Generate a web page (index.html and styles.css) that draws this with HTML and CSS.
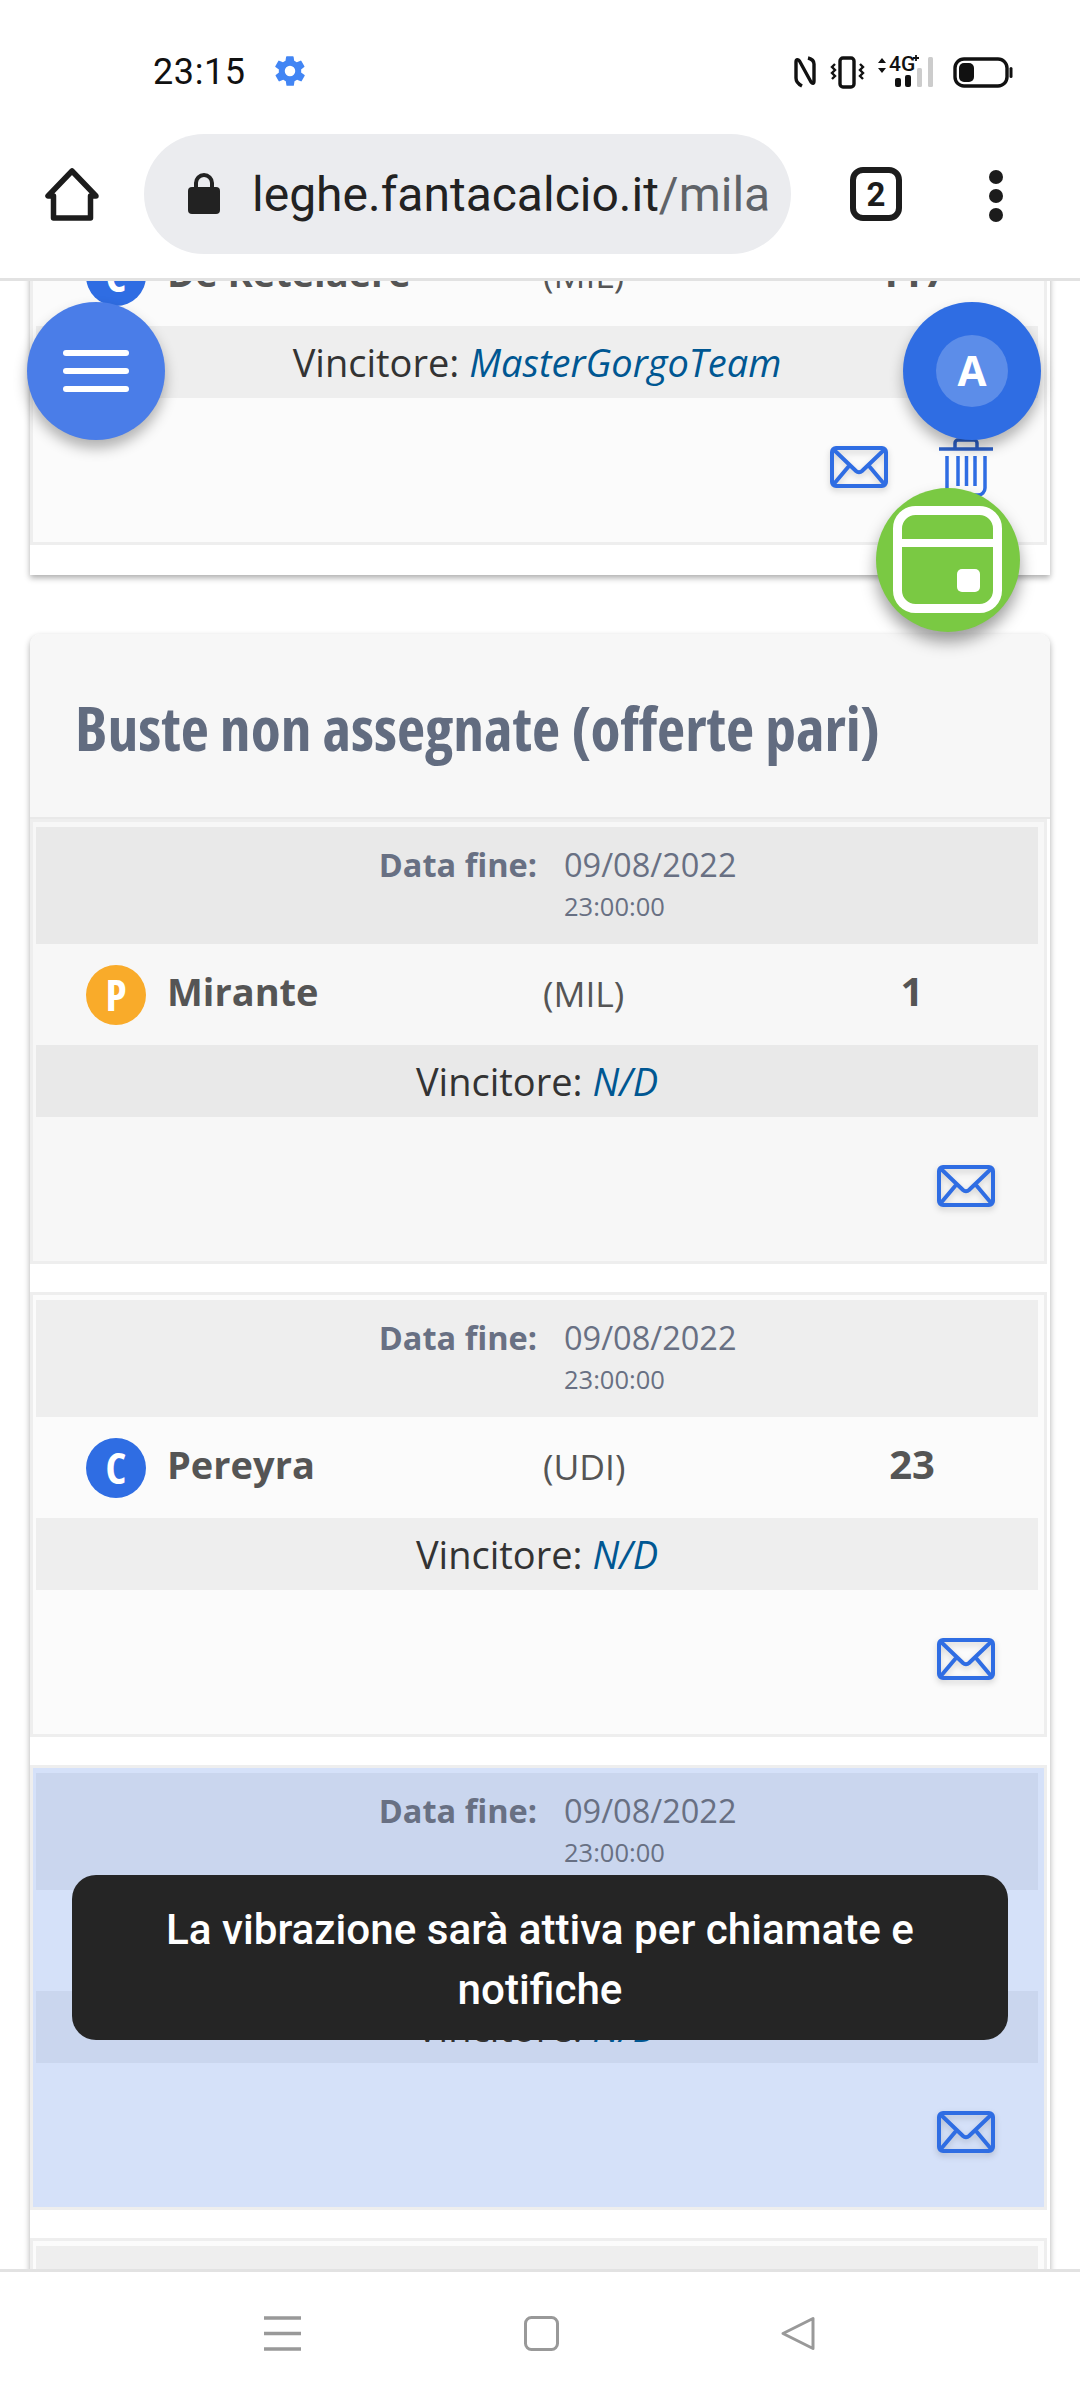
FILE: index.html
```html
<!DOCTYPE html>
<html lang="it">
<head>
<meta charset="utf-8">
<title>Buste</title>
<link rel="stylesheet" href="styles.css">
</head>
<body>
<div class="phone">
  <header class="status">
    <div class="status-left">
      <span class="clock">23:15</span>
      <svg class="gear" viewBox="0 0 24 24"><path fill="#4285f4" d="M19.4 13a7.5 7.5 0 0 0 0-2l2.1-1.6a.5.5 0 0 0 .1-.6l-2-3.5a.5.5 0 0 0-.6-.2l-2.5 1a7.400 7.400 0 0 0-1.700-1l-.4-2.600a.5.5 0 0 0-.5-.4h-4a.5.500 0 0 0-.5.4l-.4 2.600a7.400 7.400 0 0 0-1.700 1l-2.500-1a.5.500 0 0 0-.6.2l-2 3.500a.5.500 0 0 0 .1.600L4.600 11a7.500 7.500 0 0 0 0 2l-2.100 1.600a.5.500 0 0 0-.1.600l2 3.500c.1.200.4.300.6.200l2.500-1c.5.400 1.100.700 1.700 1l.4 2.600c0 .2.200.4.500.4h4c.3 0 .5-.2.500-.4l.4-2.600c.6-.3 1.200-.6 1.700-1l2.500 1c.2.100.5 0 .6-.2l2-3.500a.5.500 0 0 0-.1-.6zM12 15.500a3.500 3.500 0 1 1 0-7 3.500 3.500 0 0 1 0 7z"/></svg>
    </div>
    <svg class="sys-icons" viewBox="0 0 220 34" width="220" height="34">
      <g fill="none" stroke="#111" stroke-width="3.400">
        <path d="M9 31C5 29 3 27 3 23V7C3 4 5 4 6.500 6L18 27C19.500 29 21 29 21 26V9C21 6 19 4 15 3" stroke-linejoin="round"/>
        <rect x="47" y="3" width="14" height="29" rx="3"/>
        <path d="M42 9l-3 3 3 3-3 3 3 3-3 3M67 9l3 3-3 3 3 3-3 3 3 3" stroke-width="2.400"/>
      </g>
      <path d="M89 3l4 5h-8zM89 18l4-5h-8z" fill="#111"/>
      <text x="96" y="16" class="net">4G</text>
      <path d="M120 3h6M123 0v6" stroke="#111" stroke-width="1.800"/>
      <rect x="102" y="23" width="6" height="9" rx="2" fill="#111"/>
      <rect x="112" y="20" width="6" height="12" rx="2" fill="#111"/>
      <rect x="124" y="13" width="5" height="19" rx="1.500" fill="#ccc"/>
      <rect x="135" y="2" width="5" height="30" rx="1.500" fill="#ccc"/>
      <rect x="162" y="4" width="52" height="27" rx="9" fill="none" stroke="#111" stroke-width="3.400"/>
      <rect x="166" y="8" width="15" height="19" rx="5" fill="#111"/>
      <rect x="216.500" y="12" width="3" height="11" rx="1.500" fill="#111"/>
    </svg>
  </header>

  <nav class="toolbar">
    <svg class="home" viewBox="0 0 54 54"><path d="M27 4 3 29h5.500v22h37V29H51z" fill="none" stroke="#1c1c1c" stroke-width="5.500" stroke-linejoin="round"/></svg>
    <div class="omnibox">
      <svg class="lock" viewBox="0 0 32 42"><path d="M8 17v-6a8 8 0 0 1 16 0v6" fill="none" stroke="#222" stroke-width="4"/><rect x="0" y="15" width="32" height="27" rx="4" fill="#222"/></svg>
      <span class="url">leghe.fantacalcio.it<span class="url-path">/milan</span></span>
    </div>
    <div class="tabs">2</div>
    <div class="menu-dots"><i></i><i></i><i></i></div>
  </nav>

  <main class="viewport">
    <div class="scroller">
      <section class="card card--first">
        <article class="item">
          <div class="bar bar--date">
            <span class="date-label">Data fine:</span>
            <div class="date-value"><div>09/08/2022</div><small>23:00:00</small></div>
          </div>
          <div class="player">
            <div class="player-name"><span class="role role--c">C</span><strong>De Ketelaere</strong></div>
            <span class="team">(MIL)</span>
            <strong class="price">117</strong>
          </div>
          <div class="bar bar--winner">Vincitore: <em>MasterGorgoTeam</em></div>
          <div class="actions">
            <svg class="mail" viewBox="0 0 58 42"><use href="#mail-shape"/></svg>
            <svg class="trash" viewBox="0 0 58 60">
              <g fill="none" stroke="#2f6de3" stroke-width="3.500">
                <path d="M2 12h54" stroke="#2c60c8"/>
                <path d="M18 11V6a3 3 0 0 1 3-3h16a3 3 0 0 1 3 3v5" stroke="#2c60c8"/>
                <path d="M10 19v32a7 7 0 0 0 7 7h24a7 7 0 0 0 7-7V19M21 19v30M29.500 19v30M38 19v30"/>
              </g>
            </svg>
          </div>
        </article>
      </section>

      <section class="card">
        <h2 class="card-title">Buste non assegnate (offerte pari)</h2>
        <div class="items">
          <article class="item item--alt">
            <div class="bar bar--date">
              <span class="date-label">Data fine:</span>
              <div class="date-value"><div>09/08/2022</div><small>23:00:00</small></div>
            </div>
            <div class="player">
              <div class="player-name"><span class="role role--p">P</span><strong>Mirante</strong></div>
              <span class="team">(MIL)</span>
              <strong class="price">1</strong>
            </div>
            <div class="bar bar--winner">Vincitore: <em>N/D</em></div>
            <div class="actions"><svg class="mail" viewBox="0 0 58 42"><use href="#mail-shape"/></svg></div>
          </article>
          <article class="item">
            <div class="bar bar--date">
              <span class="date-label">Data fine:</span>
              <div class="date-value"><div>09/08/2022</div><small>23:00:00</small></div>
            </div>
            <div class="player">
              <div class="player-name"><span class="role role--c">C</span><strong>Pereyra</strong></div>
              <span class="team">(UDI)</span>
              <strong class="price">23</strong>
            </div>
            <div class="bar bar--winner">Vincitore: <em>N/D</em></div>
            <div class="actions"><svg class="mail" viewBox="0 0 58 42"><use href="#mail-shape"/></svg></div>
          </article>
          <article class="item item--active">
            <div class="bar bar--date">
              <span class="date-label">Data fine:</span>
              <div class="date-value"><div>09/08/2022</div><small>23:00:00</small></div>
            </div>
            <div class="bar bar--spacer"></div>
            <div class="bar bar--winner">Vincitore: <em>N/D</em></div>
            <div class="actions"><svg class="mail" viewBox="0 0 58 42"><use href="#mail-shape"/></svg></div>
          </article>
          <article class="item">
            <div class="bar bar--date"></div>
          </article>
        </div>
      </section>
    </div>

    <button class="fab fab--menu" aria-label="Menu"><i></i><i></i><i></i></button>
    <button class="fab fab--user"><span>A</span></button>
    <button class="fab fab--wallet" aria-label="Calendario">
      <svg viewBox="0 0 110 108" width="110" height="108"><rect x="4.500" y="4.500" width="100" height="98" rx="18" fill="none" stroke="#fff" stroke-width="9"/><path d="M5 37h99" stroke="#fff" stroke-width="8"/><rect x="64" y="63" width="23" height="23" rx="5" fill="#fff"/></svg>
    </button>
    <div class="toast">La vibrazione sarà attiva per chiamate e notifiche</div>
  </main>

  <footer class="navbar">
    <svg class="nav-icon" viewBox="0 0 37 35"><path d="M0 2h37M0 17.500h37M0 33h37" stroke="#999" stroke-width="3.500"/></svg>
    <svg class="nav-icon" viewBox="0 0 37 35"><rect x="2.500" y="1.500" width="32" height="32" rx="6" fill="none" stroke="#999" stroke-width="3"/></svg>
    <svg class="nav-icon nav-icon--back" viewBox="0 0 37 35"><path d="M33 2.500v30L3 17.500z" fill="none" stroke="#999" stroke-width="3" stroke-linejoin="round"/></svg>
  </footer>
</div>

<svg class="defs" width="0" height="0" aria-hidden="true">
  <defs>
    <g id="mail-shape" fill="none" stroke="#2f6de3" stroke-width="4">
      <rect x="2" y="2" width="54" height="38" rx="4"/>
      <path d="M3 3l23 22a4.500 4.500 0 0 0 6 0L55 3M3 39l16-19M55 39 39 20" stroke-linejoin="round"/>
    </g>
  </defs>
</svg>
</body>
</html>
```
FILE: styles.css
```css
* { box-sizing: border-box; }
html, body { margin: 0; padding: 0; }
body { width: 1080px; height: 2400px; overflow: hidden; background: #fff; font-family: "Open Sans", sans-serif; }
.phone { width: 1080px; height: 2400px; display: flex; flex-direction: column; }
.defs { position: absolute; }

/* status bar */
.status { height: 104px; flex: none; background: #fff; display: flex; justify-content: space-between; align-items: flex-start; padding: 54px 67px 0 153px; }
.status-left { display: flex; align-items: center; gap: 26px; }
.clock { font: 400 36px/34px Roboto, sans-serif; color: #111; letter-spacing: .6px; }
.gear { width: 36px; height: 36px; margin-top: -1px; }
.sys-icons { display: block; margin-top: 1px; }
.net { font: 500 21px Roboto, sans-serif; fill: #111; }

/* browser toolbar */
.toolbar { height: 177px; flex: none; background: #fff; border-bottom: 3px solid #e2e2e2; display: flex; align-items: flex-start; padding-top: 30px; position: relative; z-index: 2; }
.home { width: 54px; height: 54px; margin: 33px 0 0 45px; flex: none; }
.omnibox { width: 647px; height: 120px; margin-left: 45px; flex: none; border-radius: 60px; background: #ebecef; display: flex; align-items: center; padding-left: 44px; overflow: hidden; }
.lock { width: 32px; height: 42px; flex: none; margin-top: -2px; }
.url { margin: 2px 0 0 32px; width: 516px; overflow: hidden; white-space: nowrap; font: 400 48px/60px Roboto, sans-serif; color: #222; }
.url-path { color: #5f6368; }
.tabs { width: 52px; height: 54px; margin: 33px 0 0 59px; flex: none; border: 6px solid #1c1c1c; border-radius: 13px; display: flex; align-items: center; justify-content: center; font: 700 33px Roboto, sans-serif; color: #1c1c1c; }
.menu-dots { margin: 36px 0 0 87px; display: flex; flex-direction: column; gap: 5px; }
.menu-dots i { display: block; width: 14px; height: 14px; border-radius: 50%; background: #1c1c1c; }

/* page */
.viewport { flex: 1; position: relative; overflow: hidden; background: #fff; }
.scroller { margin-top: -181px; padding: 0 30px; }
.card { width: 1020px; background: #fff; padding-right: 3px; box-shadow: 0 3px 6px rgba(0,0,0,.32); border-radius: 10px 10px 0 0; margin-bottom: 59px; }
.card--first { padding-bottom: 30px; border-radius: 0; }
.card-title { margin: 0 -3px 0 0; height: 185px; padding: 3px 0 0 45px; display: flex; align-items: center; background: #f7f7f7; border-bottom: 2px solid #e9e9e9; border-radius: 10px 10px 0 0; font: 700 61.500px "Open Sans", sans-serif; font-stretch: 75%; color: #626c80; }
.items { display: flex; flex-direction: column; gap: 28px; }

.item { height: 445px; border: 3px solid #eee; background: #fbfbfb; padding: 5px 6px 0 3px; --bar: #eee; }
.item--alt { background: #f7f7f7; --bar: #e9e9e9; }
.item--active { background: #d5e1f9; --bar: #cad6ee; }
.bar { background: var(--bar); }
.bar--spacer { height: 101px; background: none; }
.bar--date { height: 117px; display: flex; gap: 27px; padding-top: 16px; color: #687083; }
.date-label { width: 501px; text-align: right; font-weight: 700; font-size: 32.500px; line-height: 44px; }
.date-value { font-size: 32.500px; line-height: 44px; }
.date-value small { display: block; font-size: 25.500px; line-height: 36px; margin-top: 1px; }

.player { height: 101px; display: grid; grid-template-columns: 507px 249px 240px; align-items: center; color: #555; }
.player-name { display: flex; align-items: center; gap: 21px; padding-left: 50px; }
.player-name strong { font-size: 38px; line-height: 48px; margin-top: -7px; }
.role { width: 60px; height: 60px; border-radius: 50%; flex: none; display: flex; align-items: center; justify-content: center; color: #fff; font: 700 43px "Open Sans", sans-serif; font-stretch: 75%; }
.role--c { background: #2f6de3; }
.role--p { background: #f9ab2a; }
.team { font-size: 35.500px; margin-top: -3px; }
.price { font-size: 40px; text-align: center; margin-top: -8px; }

.bar--winner { height: 72px; display: flex; align-items: center; justify-content: center; gap: 10px; font-size: 38px; color: #333; }
.bar--winner em { color: #005792; }

.actions { display: flex; justify-content: flex-end; align-items: flex-start; gap: 49px; padding: 48px 43px 0 0; }
.mail { width: 58px; height: 42px; flex: none; filter: drop-shadow(0 3px 3px rgba(0,0,0,.16)); }
.trash { width: 58px; height: 60px; flex: none; margin-top: -9px; }

/* floating buttons */
.fab { position: absolute; padding: 0; border: 0; border-radius: 50%; display: flex; align-items: center; justify-content: center; box-shadow: 0 8px 14px rgba(0,0,0,.3); }
.fab--menu { left: 27px; top: 21px; width: 138px; height: 138px; background: #4a7de8; flex-direction: column; gap: 12px; }
.fab--menu i { display: block; width: 66px; height: 6px; border-radius: 3px; background: #fff; }
.fab--user { left: 903px; top: 21px; width: 138px; height: 138px; background: #2f6de3; }
.fab--user span { width: 72px; height: 72px; border-radius: 50%; background: rgba(255,255,255,.22); display: flex; align-items: center; justify-content: center; padding-bottom: 3px; font: 700 42px "Open Sans", sans-serif; color: #fff; }
.fab--wallet { left: 876px; top: 207px; width: 144px; height: 144px; background: #7ac943; padding-top: 0; box-shadow: 0 10px 16px rgba(0,0,0,.38); }

.toast { position: absolute; left: 72px; top: 1594px; width: 936px; height: 165px; padding: 25px 60px 0; border-radius: 24px; background: #252525; color: #fff; text-align: center; font: 500 42.200px/60px Roboto, sans-serif; }

/* navigation bar */
.navbar { height: 131px; flex: none; background: #fff; border-top: 3px solid #e2e2e2; display: flex; justify-content: center; gap: 222px; padding-top: 44px; position: relative; z-index: 2; }
.nav-icon { width: 37px; height: 35px; }
.nav-icon--back { margin-left: -2px; }
```
